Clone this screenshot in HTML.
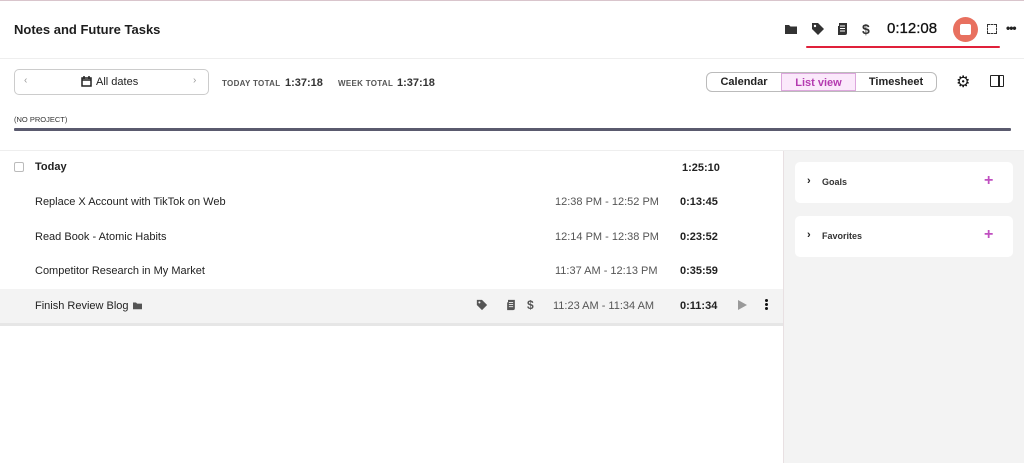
<!DOCTYPE html>
<html><head><style>
*{margin:0;padding:0;box-sizing:border-box}
body{width:1024px;height:463px;overflow:hidden;font-family:"Liberation Sans",sans-serif;background:#fff;color:#222;position:relative}
.a{position:absolute}
.b{font-weight:bold}
</style></head><body>
<div class="a" style="left:0;top:0;width:1024px;height:1px;background:#d9c5cc"></div>
<div class="a b" style="left:14px;top:22px;font-size:13px;color:#1e1e1e">Notes and Future Tasks</div>
<svg class="a" style="left:784px;top:23px" width="14" height="12" viewBox="0 0 14 12"><path d="M1 2h4l1.5 1.5H13V11H1z" fill="#333"/></svg>
<svg class="a" style="left:811px;top:22px" width="14" height="14" viewBox="0 0 14 14"><path d="M1 1h6l6 6-6 6-6-6z" fill="#333"/><circle cx="4" cy="4" r="1.2" fill="#fff"/></svg>
<svg class="a" style="left:837px;top:22px" width="11" height="14" viewBox="0 0 11 14"><path d="M2 1h8v10c0 1.5-1 2-2 2H1V4h1z" fill="#333"/><path d="M3 4h5M3 6.5h5M3 9h5" stroke="#fff"/></svg>
<div class="a b" style="left:862px;top:21px;font-size:14px;color:#333">$</div>
<div class="a" style="left:887px;top:20px;font-size:15px;color:#111;-webkit-text-stroke:0.3px #111">0:12:08</div>
<div class="a" style="left:953px;top:17px;width:25px;height:25px;border-radius:50%;background:#e8705f"></div>
<div class="a" style="left:960px;top:24px;width:11px;height:11px;border-radius:2px;background:#fff"></div>
<div class="a" style="left:987px;top:24px;width:10px;height:10px;border:1.5px dashed #333"></div>
<div class="a b" style="left:1006px;top:21px;font-size:12px;letter-spacing:-1px">•••</div>
<div class="a" style="left:806px;top:46px;width:194px;height:2px;background:#e0203a;border-radius:1px"></div>
<div class="a" style="left:0;top:58px;width:1024px;height:1px;background:#eee"></div>

<div class="a" style="left:14px;top:69px;width:195px;height:26px;border:1px solid #ccc;border-radius:5px"></div>
<div class="a" style="left:24px;top:75px;font-size:10px;color:#999">‹</div>
<div class="a" style="left:193px;top:75px;font-size:10px;color:#999">›</div>
<svg class="a" style="left:81px;top:76px" width="11" height="11" viewBox="0 0 11 11"><rect x="1" y="2" width="9" height="8" fill="none" stroke="#222" stroke-width="1.5"/><path d="M1 4h9M3 0v3M8 0v3" stroke="#222" stroke-width="1.5"/></svg>
<div class="a" style="left:96px;top:76px;font-size:11px;color:#222">All dates</div>
<div class="a b" style="left:222px;top:79px;font-size:8px;color:#555;letter-spacing:.3px">TODAY TOTAL</div>
<div class="a b" style="left:285px;top:77px;font-size:11px;color:#333">1:37:18</div>
<div class="a b" style="left:338px;top:79px;font-size:8px;color:#555;letter-spacing:.3px">WEEK TOTAL</div>
<div class="a b" style="left:397px;top:77px;font-size:11px;color:#333">1:37:18</div>

<div class="a" style="left:706px;top:72px;width:231px;height:20px;border:1px solid #bbb;border-radius:6px;overflow:hidden;font-size:11px;font-weight:bold">
<div class="a" style="left:0;top:0;width:74px;height:18px;text-align:center;line-height:18px;color:#222">Calendar</div>
<div class="a" style="left:74px;top:0;width:75px;height:18px;text-align:center;line-height:18px;color:#b43bb0;background:#fbe9fb;border:1px solid #dca6dc">List view</div>
<div class="a" style="left:149px;top:0;width:80px;height:18px;text-align:center;line-height:18px;color:#222">Timesheet</div>
</div>
<div class="a" style="left:956px;top:72px;font-size:16px;color:#111">⚙</div>
<div class="a" style="left:990px;top:75px;width:14px;height:12px;border:1.5px solid #222;border-radius:1px"></div>
<div class="a" style="left:998px;top:75px;width:1.5px;height:12px;background:#222"></div>

<div class="a" style="left:14px;top:115px;font-size:7.5px;color:#333">(NO PROJECT)</div>
<div class="a" style="left:14px;top:128px;width:997px;height:3px;background:#5a5a6e;border-radius:1px"></div>
<div class="a" style="left:0;top:150px;width:1024px;height:1px;background:#eee"></div>

<div class="a" style="left:0;top:151px;width:783px;height:312px;background:#fff"></div>
<div class="a" style="left:783px;top:151px;width:241px;height:312px;background:#f3f3f3;border-left:1px solid #e8e0e2"></div>

<div class="a" style="left:14px;top:162px;width:10px;height:10px;border:1px solid #bbb;border-radius:2px"></div>
<div class="a b" style="left:35px;top:161px;font-size:11px">Today</div>
<div class="a b" style="left:682px;top:162px;font-size:11px">1:25:10</div>

<div class="a" style="left:35px;top:196px;font-size:11px">Replace X Account with TikTok on Web</div>
<div class="a" style="left:555px;top:196px;font-size:11px;color:#555">12:38 PM - 12:52 PM</div>
<div class="a b" style="left:680px;top:196px;font-size:11px">0:13:45</div>
<div class="a" style="left:35px;top:231px;font-size:11px">Read Book - Atomic Habits</div>
<div class="a" style="left:555px;top:231px;font-size:11px;color:#555">12:14 PM - 12:38 PM</div>
<div class="a b" style="left:680px;top:231px;font-size:11px">0:23:52</div>
<div class="a" style="left:35px;top:265px;font-size:11px">Competitor Research in My Market</div>
<div class="a" style="left:555px;top:265px;font-size:11px;color:#555">11:37 AM - 12:13 PM</div>
<div class="a b" style="left:680px;top:265px;font-size:11px">0:35:59</div>

<div class="a" style="left:0;top:289px;width:783px;height:34px;background:#f3f3f3"></div>
<div class="a" style="left:0;top:323px;width:783px;height:3px;background:#e6e6e6"></div>
<div class="a" style="left:35px;top:300px;font-size:11px">Finish Review Blog</div>
<svg class="a" style="left:132px;top:301px" width="11" height="9" viewBox="0 0 14 12"><path d="M1 2h4l1.5 1.5H13V11H1z" fill="#555"/></svg>
<svg class="a" style="left:476px;top:299px" width="12" height="12" viewBox="0 0 14 14"><path d="M1 1h6l6 6-6 6-6-6z" fill="#555"/><circle cx="4" cy="4" r="1.2" fill="#f3f3f3"/></svg>
<svg class="a" style="left:506px;top:299px" width="10" height="12" viewBox="0 0 11 14"><path d="M2 1h8v10c0 1.5-1 2-2 2H1V4h1z" fill="#555"/><path d="M3 4h5M3 6.5h5M3 9h5" stroke="#f3f3f3"/></svg>
<div class="a b" style="left:527px;top:298px;font-size:12px;color:#555">$</div>
<div class="a" style="left:553px;top:300px;font-size:11px;color:#555">11:23 AM - 11:34 AM</div>
<div class="a b" style="left:680px;top:300px;font-size:11px">0:11:34</div>
<svg class="a" style="left:738px;top:300px" width="9" height="10"><path d="M0 0l9 5-9 5z" fill="#999"/></svg>
<div class="a" style="left:765px;top:299px;width:3px;height:3px;background:#111;border-radius:50%;box-shadow:0 4px 0 #111,0 8px 0 #111"></div>

<div class="a" style="left:795px;top:162px;width:218px;height:41px;background:#fff;border-radius:5px"></div>
<div class="a b" style="left:807px;top:175px;font-size:11px">›</div>
<div class="a b" style="left:822px;top:177px;font-size:9px;color:#333">Goals</div>
<div class="a b" style="left:984px;top:172px;font-size:16px;color:#c04fc0">+</div>
<div class="a" style="left:795px;top:216px;width:218px;height:41px;background:#fff;border-radius:5px"></div>
<div class="a b" style="left:807px;top:229px;font-size:11px">›</div>
<div class="a b" style="left:822px;top:231px;font-size:9px;color:#333">Favorites</div>
<div class="a b" style="left:984px;top:226px;font-size:16px;color:#c04fc0">+</div>
</body></html>
